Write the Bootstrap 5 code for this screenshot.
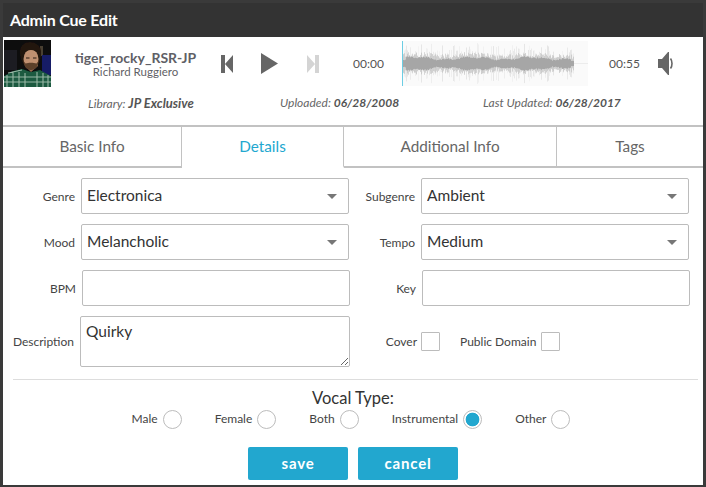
<!DOCTYPE html>
<html lang="en">
<head>
<meta charset="utf-8">
<title>Admin Cue Edit</title>
<link href="https://cdn.jsdelivr.net/npm/bootstrap@5.3.0/dist/css/bootstrap.min.css" rel="stylesheet">
<style>
html,body{height:487px;overflow:hidden}
body{background:#3a3a3a;font-family:Lato,"Noto Sans",sans-serif;color:#444}
.cue-ghost{height:3px}
.cue-modal{margin-left:3px;width:700px;height:482px;background:#fff}
.cue-head{height:34px;background:#333;color:#fff;font-size:16px;letter-spacing:-.2px;font-weight:700;line-height:33px;padding-left:7px}
.cue-player{height:47px;margin-top:3px;padding-left:1px}
.cue-avatar{width:47px;height:47px;display:block}
.cue-title{width:169px;text-align:center;color:#5f5f66;line-height:13px}
.cue-title b{display:block;font-size:14px;font-weight:700;line-height:15px}
.cue-title span{font-size:11.5px;display:block}
.cue-ctl{display:block;fill:#666}
.cue-prev{margin-left:1px}.cue-play{margin-left:28px}.cue-next{margin-left:29px;fill:#d4d4d4}
.cue-time{font-size:12px;color:#555;width:29px;text-align:center}
.cue-t1{margin-left:34px}.cue-wave{margin-left:20px;width:186px;height:45px;display:block}
.cue-t2{margin-left:21px}.cue-vol{margin-left:20px}
.cue-meta{height:38px;font-size:12px;font-style:italic;color:#666;padding-top:8px;line-height:16px}
.cue-meta b{font-size:13px;color:#555}
.cue-meta .cue-date{font-size:12px}
.cue-meta span{white-space:nowrap}
.cue-m1{margin-left:85px;width:192px}.cue-m2{width:203px}
.cue-tabs{border-top:2px solid #c2c2c2;height:43px}
.cue-tabs .nav-item{border-bottom:2px solid #c2c2c2;border-right:1px solid #c2c2c2}
.cue-tabs .nav-item:last-child{border-right:0}
.cue-tabs .nav-link{color:#666;font-size:15.3px;padding:0;line-height:39px;text-align:center;height:40px}
.cue-tabs .cue-on{border-bottom-color:transparent}
.cue-tabs .cue-on .nav-link{color:#22a7cf}
.cue-w1{width:179px}.cue-w2{width:162px}.cue-w3{width:213px}.cue-w4{width:146px}
.cue-form{padding-top:10px}
.cue-line{margin-bottom:10px}
.cue-label{font-size:12px;color:#444;text-align:right;margin:1px 6px 0 0;flex:none}
.cue-l-sel{width:72px}.cue-l-in{width:73px}.cue-l-ta{width:71px}
.cue-r-sel{width:62px}.cue-r-in{width:63px}
.cue-r-ta{width:64px;margin-right:4px}
.cue-form .form-select,.cue-form .form-control{width:268px;height:36px;border:1px solid #bcbcbc;border-radius:2px;font-size:15.5px;color:#333;padding:0 5px;box-shadow:none;flex:none}
.cue-form .form-select{background-image:url("data:image/svg+xml,%3csvg xmlns='http://www.w3.org/2000/svg' viewBox='0 0 10 5'%3e%3cpath fill='%23777' d='M0 0h10L5 5z'/%3e%3c/svg%3e");background-size:10px 5px;background-position:right 11px center}
.cue-form textarea.form-control{width:270px;height:51px;min-height:0;padding:3px 5px;line-height:22px}
.cue-form .form-check-input{width:19px;height:19px;margin:0;border:1px solid #bcbcbc;flex:none}
.cue-form .form-check-input[type=checkbox]{border-radius:1px}
.cue-pd{margin:1px 5px 0 20px;font-size:12px}
.cue-rule{margin:12px 5px 0 10px;border-top:1px solid #a9a9a9;opacity:.4}
.cue-vocal{font-size:16.5px;color:#333;line-height:20px;margin-top:8px;text-align:center}
.cue-radios{gap:33px;margin-top:1px;padding-right:4px;height:20px}
.cue-radios label{font-size:12px;color:#444;margin-right:5px}
.cue-form .form-check-input:checked{background:radial-gradient(circle,#22a7cf 0 6.5px,#fff 7.2px);border-color:#bcbcbc}
.cue-btns{gap:10px;margin-top:18px}
.cue-btn{width:100px;height:33px;background:#22a7cf;color:#fff;border:0;border-radius:2px;font-size:15px;font-weight:700;letter-spacing:.8px;padding:0}
</style>
</head>
<body>
<div class="cue-ghost"></div>
<div class="cue-modal">
  <div class="cue-head">Admin Cue Edit</div>
  <div class="cue-player d-flex align-items-center">
    <svg class="cue-avatar" viewBox="0 0 47 47" role="img" aria-label="Portrait">
      <defs><filter id="cueSoft" x="0" y="0" width="1" height="1"><feGaussianBlur stdDeviation=".6"/></filter></defs>
      <g filter="url(#cueSoft)">
      <rect width="47" height="47" fill="#08080c"/>
      <rect x="0" y="10" width="13" height="20" fill="#1a1a20"/>
      <rect x="36" y="6" width="3" height="10" fill="#4a3f30"/>
      <rect x="38" y="15" width="9" height="20" fill="#141c66"/>
      <path d="M0 47V36l9-5 9-2 9 3 9-2 11 6v11z" fill="#1c5a40"/>
      <path d="M3 35v12M9 32v15M15 30v17M21 33v14M33 32v15M39 33v14M44 35v12M0 37h47M0 42h47M4 33l14-3" stroke="#c0d6c6" stroke-width="1.100" opacity=".75"/>
      <path d="M21 26l6 6 7-6v-4H21z" fill="#9a6c50"/>
      <path d="M16 14C15 5 21 2 26 2s12 3 11 12c0 4-1 8-3 10l-14 0c-2-2-4-6-4-10z" fill="#21150d"/>
      <ellipse cx="27" cy="19" rx="7.500" ry="9.500" fill="#c0906f"/>
      <path d="M19.500 21c0 5 3 9 7.500 9s7.500-4 7.500-9l-2 2.500c-3-1-8-1-11 0z" fill="#5c3f2c"/>
      <path d="M19 14c2-3 4-4 8-4s6 1 8 4l1-5c-2-3-5-4-9-4s-8 2-9 5z" fill="#21150d"/>
      <path d="M22 18h3.500M29 18h3.500" stroke="#2a1a12" stroke-width="1.100"/>
      </g>
    </svg>
    <div class="cue-title"><b>tiger_rocky_RSR-JP</b><span>Richard Ruggiero</span></div>
    <svg class="cue-ctl cue-prev" width="12" height="20" viewBox="0 0 12 20"><path d="M0 1h4v18H0zM4 10l8-9v18z"/></svg>
    <svg class="cue-ctl cue-play" width="17" height="21" viewBox="0 0 17 21"><path d="M0 0l17 10.500L0 21z"/></svg>
    <svg class="cue-ctl cue-next" width="12" height="20" viewBox="0 0 12 20"><path d="M8 1h4v18H8zM8 10L0 1v18z"/></svg>
    <div class="cue-time cue-t1">00:00</div>
    <svg class="cue-wave" id="cueWave" viewBox="0 0 186 45"><defs><filter id="cueBlur" x="0" y="0" width="1" height="1"><feGaussianBlur stdDeviation=".6"/></filter></defs><rect width="186" height="45" fill="#fafafa"/></svg>
    <div class="cue-time cue-t2">00:55</div>
    <svg class="cue-ctl cue-vol" width="16" height="23" viewBox="0 0 16 23"><path d="M0 7h4l6-7h1v23h-1l-6-7H0z"/><path d="M12.500 6.500c2 2.500 2 7.500 0 10" fill="none" stroke="#666" stroke-width="1.600"/></svg>
  </div>
  <div class="cue-meta d-flex">
    <span class="cue-m1">Library: <b>JP Exclusive</b></span>
    <span class="cue-m2">Uploaded: <b class="cue-date">06/28/2008</b></span>
    <span>Last Updated: <b class="cue-date">06/28/2017</b></span>
  </div>
  <ul class="nav cue-tabs flex-nowrap">
    <li class="nav-item cue-w1"><a class="nav-link" href="#">Basic Info</a></li>
    <li class="nav-item cue-w2 cue-on"><a class="nav-link" href="#">Details</a></li>
    <li class="nav-item cue-w3"><a class="nav-link" href="#">Additional Info</a></li>
    <li class="nav-item cue-w4"><a class="nav-link" href="#">Tags</a></li>
  </ul>
  <form class="cue-form">
    <div class="row g-0 cue-line">
      <div class="col-6 d-flex align-items-center"><label class="cue-label cue-l-sel">Genre</label><select class="form-select"><option>Electronica</option></select></div>
      <div class="col-6 d-flex align-items-center"><label class="cue-label cue-r-sel">Subgenre</label><select class="form-select"><option>Ambient</option></select></div>
    </div>
    <div class="row g-0 cue-line">
      <div class="col-6 d-flex align-items-center"><label class="cue-label cue-l-sel">Mood</label><select class="form-select"><option>Melancholic</option></select></div>
      <div class="col-6 d-flex align-items-center"><label class="cue-label cue-r-sel">Tempo</label><select class="form-select"><option>Medium</option></select></div>
    </div>
    <div class="row g-0 cue-line">
      <div class="col-6 d-flex align-items-center"><label class="cue-label cue-l-in">BPM</label><input class="form-control" type="text"></div>
      <div class="col-6 d-flex align-items-center"><label class="cue-label cue-r-in">Key</label><input class="form-control" type="text"></div>
    </div>
    <div class="row g-0 cue-line">
      <div class="col-6 d-flex align-items-center"><label class="cue-label cue-l-ta">Description</label><textarea class="form-control">Quirky</textarea></div>
      <div class="col-6 d-flex align-items-center"><label class="cue-label cue-r-ta">Cover</label><input class="form-check-input" type="checkbox"><label class="cue-pd">Public Domain</label><input class="form-check-input" type="checkbox"></div>
    </div>
    <hr class="cue-rule">
    <div class="cue-vocal">Vocal Type:</div>
    <div class="d-flex justify-content-center align-items-center cue-radios">
      <div class="d-flex align-items-center"><label>Male</label><input class="form-check-input" type="radio" name="vt"></div>
      <div class="d-flex align-items-center"><label>Female</label><input class="form-check-input" type="radio" name="vt"></div>
      <div class="d-flex align-items-center"><label>Both</label><input class="form-check-input" type="radio" name="vt"></div>
      <div class="d-flex align-items-center"><label>Instrumental</label><input class="form-check-input" type="radio" name="vt" checked></div>
      <div class="d-flex align-items-center"><label>Other</label><input class="form-check-input" type="radio" name="vt"></div>
    </div>
    <div class="d-flex justify-content-center cue-btns">
      <button type="button" class="btn cue-btn">save</button>
      <button type="button" class="btn cue-btn">cancel</button>
    </div>
  </form>
</div>
<script>
(function(){
  var s=document.getElementById('cueWave'),seed=7,g='';
  function r(){seed=(seed*16807)%2147483647;return seed/2147483647;}
  for(var x=0;x<172;x++){
    var env=4.5+1.2*Math.sin(x/9)+.8*Math.sin(x/3.1);
    var far=6+r()*r()*16, mid=env+1+r()*5, core=env+r()*1.2;
    if(x>168) core*=.6;
    if(x<4) core*=.6;
    g+='<rect x="'+x+'" y="'+(22.5-far)+'" width="1" height="'+(2*far)+'" fill="#aaa" opacity="'+(.08+r()*.18)+'"/>';
    g+='<rect x="'+x+'" y="'+(22.5-mid)+'" width="1" height="'+(2*mid)+'" fill="#aaa" opacity=".45"/>';
    g+='<rect x="'+x+'" y="'+(22.5-core)+'" width="1" height="'+(2*core)+'" fill="#a6a6a6"/>';
  }
  s.insertAdjacentHTML('beforeend','<g filter="url(#cueBlur)">'+g+'</g><rect x="172" y="22" width="14" height="1" fill="#ececec"/><rect x="0" width="1" height="45" fill="#6ccde3"/>');
})();
</script>
<script src="https://cdn.jsdelivr.net/npm/bootstrap@5.3.0/dist/js/bootstrap.bundle.min.js"></script>
</body>
</html>
